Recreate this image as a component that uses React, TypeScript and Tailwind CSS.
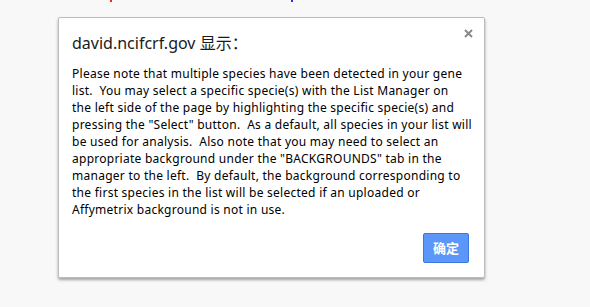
import React from "react"

const lines = [
  "Please note that multiple species have been detected in your gene",
  "list.  You may select a specific specie(s) with the List Manager on",
  "the left side of the page by highlighting the specific specie(s) and",
  "pressing the \"Select\" button.  As a default, all species in your list will",
  "be used for analysis.  Also note that you may need to select an",
  "appropriate background under the \"BACKGROUNDS\" tab in the",
  "manager to the left.  By default, the background corresponding to",
  "the first species in the list will be selected if an uploaded or",
  "Affymetrix background is not in use.",
]

export default function App() {
  return (
    <div className="relative w-[590px] h-[307px] overflow-hidden bg-[#f8f8f8] pl-[58px] pt-[17px] font-['Noto_Sans','Noto_Sans_CJK_SC',sans-serif]">
      {/* clipped bits of the page behind the dialog */}
      <span className="absolute left-[110px] top-0 w-[2px] h-[2px] bg-[#ff2020]" />
      <span className="absolute left-[291px] top-0 w-[2px] h-[2px] bg-[#2030ff]" />

      <div className="relative flex flex-col w-[427px] h-[261px] bg-white border border-[#bdbdbd] rounded-[2px] shadow-[0_2px_3px_rgba(0,0,0,0.35)] pl-[13px] pr-[15px] pt-[13px] pb-[14px]">
        <button className="absolute right-[8px] top-[7px] w-[16px] h-[16px] flex items-center justify-center text-[#8a8a8a]">
          <svg width="9" height="9" viewBox="0 0 9 9">
            <path d="M1 1L8 8M8 1L1 8" stroke="currentColor" strokeWidth="2" />
          </svg>
        </button>

        <h1 className="text-[16px] leading-[24px] text-[#1a1a1a]">
          david.ncifcrf.gov 显示：
        </h1>

        <p className="mt-[10px] text-[12px] leading-[17px] tracking-[0.26px] text-black whitespace-pre">
          {lines.join("\n")}
        </p>

        <div className="mt-auto flex justify-end">
          <button className="w-[46px] h-[30px] rounded-[2px] bg-[#5a97f8] border border-[#3a77df] text-white text-[13px] font-bold font-['Noto_Sans_CJK_SC',sans-serif]">
            确定
          </button>
        </div>
      </div>
    </div>
  )
}
